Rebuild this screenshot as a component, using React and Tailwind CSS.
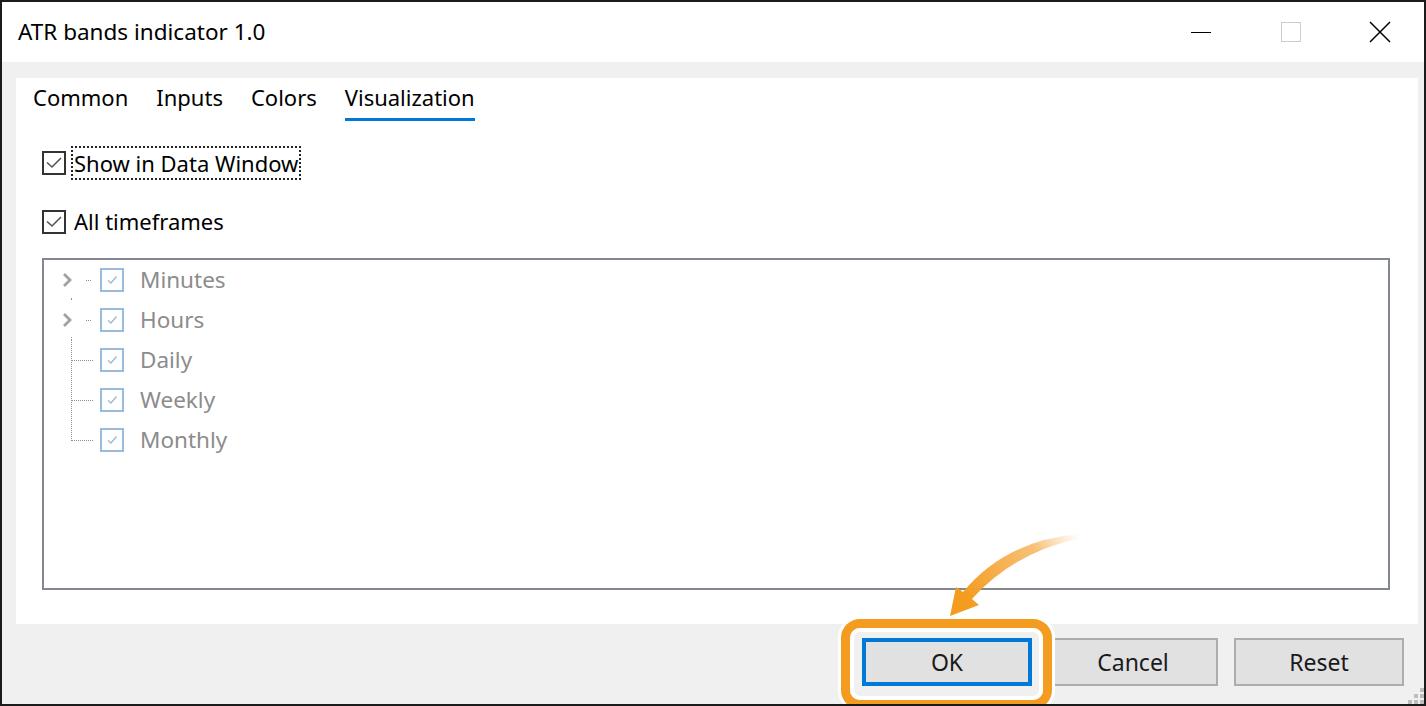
import React from "react";

const FONT = { fontFamily: '"Noto Sans", "Open Sans", sans-serif' };

function TitleButtons() {
  return (
    <div className="flex h-full">
      <div className="w-[90px] h-full flex items-center justify-center">
        <div className="w-[20px] h-px bg-black" />
      </div>
      <div className="w-[90px] h-full flex items-center justify-center">
        <div className="w-[20px] h-[20px] border-[1.5px] border-[#cccccc]" />
      </div>
      <div className="w-[88px] h-full flex items-center justify-center">
        <svg width="22" height="22" viewBox="0 0 22 22">
          <path d="M1 1 L21 21 M21 1 L1 21" stroke="#000" strokeWidth="1.5" fill="none" />
        </svg>
      </div>
    </div>
  );
}

function Check({ checked = true }) {
  return (
    <div className="w-[24px] h-[24px] border-2 border-[#333333] bg-white flex items-center justify-center shrink-0">
      {checked && (
        <svg width="20" height="20" viewBox="0 0 20 20">
          <path d="M3 9.5 L8 14 L17 5" stroke="#555" strokeWidth="1.6" fill="none" />
        </svg>
      )}
    </div>
  );
}

function TreeCheck() {
  return (
    <div className="w-[24px] h-[24px] border-2 border-[#98bbdc] bg-white flex items-center justify-center shrink-0">
      <svg width="20" height="20" viewBox="0 0 20 20">
        <path d="M6 10.5 L9 13 L14.5 6.5" stroke="#9bbcdc" strokeWidth="1.4" fill="none" />
      </svg>
    </div>
  );
}

function Connector({ kind }) {
  const dot = { stroke: "#8f8f8f", strokeWidth: 1, strokeDasharray: "1 1", fill: "none" };
  return (
    <svg width="56" height="40" viewBox="0 0 56 40" className="shrink-0">
      {(kind === "first" || kind === "second") && (
        <>
          <path d="M20 14 L26 20 L20 26" stroke="#a0a0a0" strokeWidth="2.8" fill="none" />
          <path d="M42 20.5 L48 20.5" {...dot} />
        </>
      )}
      {kind === "first" && <rect x="27" y="38" width="1" height="2" fill="#8f8f8f" />}
      {kind === "second" && <path d="M27.5 37 L27.5 40" {...dot} />}
      {kind === "mid" && (
        <>
          <path d="M27.5 0 L27.5 40" {...dot} />
          <path d="M28 20.5 L50 20.5" {...dot} />
        </>
      )}
      {kind === "last" && (
        <>
          <path d="M27.5 0 L27.5 21" {...dot} />
          <path d="M28 20.5 L50 20.5" {...dot} />
        </>
      )}
    </svg>
  );
}

const tree = [
  { label: "Minutes", kind: "first" },
  { label: "Hours", kind: "second" },
  { label: "Daily", kind: "mid" },
  { label: "Weekly", kind: "mid" },
  { label: "Monthly", kind: "last" },
];

function Button({ children, primary }) {
  return (
    <div
      className={
        "w-[170px] h-[48px] bg-[#e1e1e1] flex items-center justify-center text-[23px] text-[#1a1a1a] " +
        (primary ? "border-4 border-[#0078d7]" : "border-2 border-[#adadad]")
      }
    >
      {children}
    </div>
  );
}

export default function App() {
  const tabs = ["Common", "Inputs", "Colors", "Visualization"];
  return (
    <div
      className="relative w-[1426px] h-[706px] overflow-hidden border-2 border-[#1b1b1b] bg-[#f0f0f0] flex flex-col text-[#111]"
      style={FONT}
    >
      {/* title bar */}
      <div className="h-[60px] bg-white flex items-center justify-between shrink-0">
        <div className="pl-[16px] text-[22.5px] text-black">ATR bands indicator 1.0</div>
        <TitleButtons />
      </div>

      {/* body */}
      <div className="pt-[16px] pl-[14px] pr-[6px]">
        <div className="h-[546px] bg-white flex flex-col">
          <div className="flex gap-[28px] pl-[17px] pt-[5px]">
            {tabs.map((t, i) => (
              <div key={t} className="flex flex-col items-center">
                <div className="text-[22px] leading-[29px] text-black">{t}</div>
                <div
                  className={
                    "mt-[6px] h-[3px] w-full " + (i === 3 ? "bg-[#0078d7]" : "bg-transparent")
                  }
                />
              </div>
            ))}
          </div>

          <div className="pl-[26px] pt-[25px] flex items-center">
            <Check />
            <div className="ml-[5px] px-[1px] h-[34px] flex items-center border-2 border-dotted border-[#222] text-[22px] text-black">
              Show in Data Window
            </div>
          </div>

          <div className="pl-[26px] pt-[25px] flex items-center">
            <Check />
            <div className="ml-[8px] text-[22px] text-black">All timeframes</div>
          </div>

          <div className="ml-[26px] mr-[28px] mt-[20px] h-[332px] border-2 border-[#838890] flex flex-col">
            {tree.map((r) => (
              <div key={r.label} className="h-[40px] flex items-center">
                <Connector kind={r.kind} />
                <TreeCheck />
                <div className="ml-[16px] text-[22.5px] text-[#8c8c8c]">{r.label}</div>
              </div>
            ))}
          </div>
        </div>
      </div>

      {/* buttons */}
      <div className="flex justify-end gap-[16px] pt-[14px] pr-[20px]">
        <Button primary>OK</Button>
        <Button>Cancel</Button>
        <Button>Reset</Button>
      </div>

      {/* resize grip */}
      <div className="absolute right-0 bottom-0 w-[16px] h-[16px] grid grid-cols-3 gap-[2px]">
        <div />
        <div />
        <div className="bg-[#bdbdbd]" />
        <div />
        <div className="bg-[#bdbdbd]" />
        <div className="bg-[#bdbdbd]" />
        <div className="bg-[#bdbdbd]" />
        <div className="bg-[#bdbdbd]" />
        <div className="bg-[#bdbdbd]" />
      </div>

      {/* highlight around OK */}
      <div className="absolute left-[836px] top-[614px] w-[217px] h-[96px] rounded-[22px] border-[3px] border-white">
        <div className="w-full h-full rounded-[19px] border-[9px] border-[#f39c1f]">
          <div className="w-full h-full rounded-[10px] border-4 border-white" />
        </div>
      </div>

      {/* arrow */}
      <svg className="absolute left-0 top-0 pointer-events-none" width="1426" height="706">
        <defs>
          <linearGradient id="ag" gradientUnits="userSpaceOnUse" x1="1078" y1="534" x2="965" y2="598">
            <stop offset="0" stopColor="#f7c27a" stopOpacity="0" />
            <stop offset="0.35" stopColor="#f6b560" stopOpacity="0.85" />
            <stop offset="1" stopColor="#f39c1f" />
          </linearGradient>
        </defs>
        <path
          d="M1078,532 Q1004,538 961,590 L954,585 L948,614 L977,603 L970,597 Q1012,550 1079,536 Z"
          fill="url(#ag)"
        />
      </svg>
    </div>
  );
}
